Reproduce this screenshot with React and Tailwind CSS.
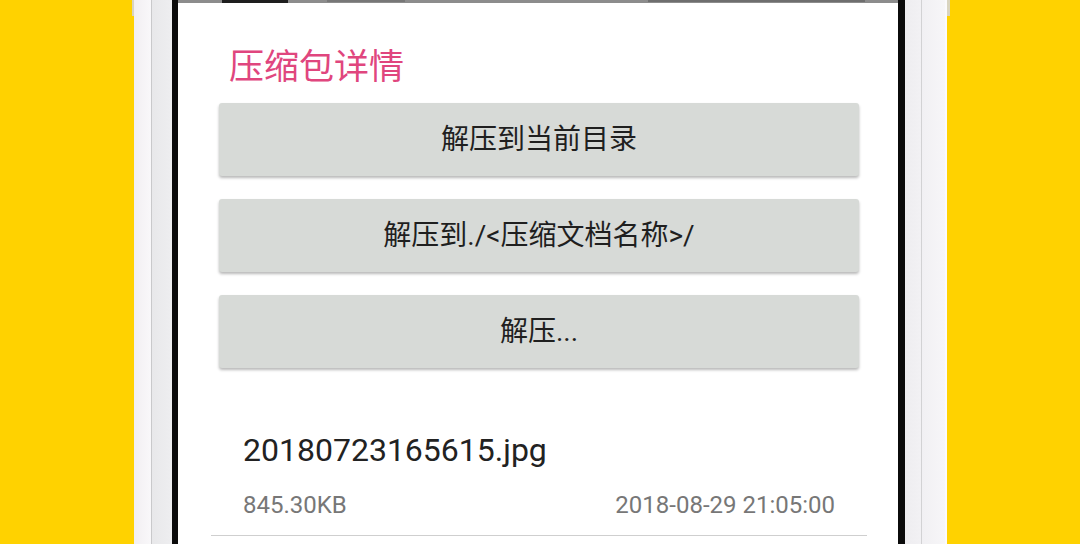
import React from "react";

const cjk = { fontFamily: 'Roboto, "Noto Sans CJK SC", sans-serif' };

function Btn({ children }) {
  return (
    <div className="h-[73px] rounded-[3px] bg-[#d7dad7] shadow-[0_2px_3px_rgba(0,0,0,0.28)] flex items-center justify-center text-[28px] text-[#1f1f1f] leading-none">
      {children}
    </div>
  );
}

export default function App() {
  return (
    <div className="w-[1080px] h-[544px] overflow-hidden bg-[#ffd200] flex" style={cjk}>
      <div className="w-[134px] shrink-0 flex justify-end">
        <div className="w-[3px] h-[16px] bg-[#d9d4c0] mr-[-1px]" />
      </div>
      {/* left frame */}
      <div className="w-[17px] shrink-0 bg-gradient-to-r from-[#f2eff2] to-[#f9f8fa]" />
      <div className="w-[1px] shrink-0 bg-[#c9c9cb]" />
      <div className="w-[20px] shrink-0 bg-gradient-to-r from-[#e8e8ea] to-[#eeeef0]" />
      <div className="w-[6px] shrink-0 bg-[#0b0b0b]" />
      {/* screen */}
      <div className="w-[720px] shrink-0 bg-white flex flex-col">
        <div className="h-[3px] bg-[#8c8c8c] flex">
          <div className="w-[44px]" />
          <div className="w-[66px] bg-[#1e1e1e]" />
          <div className="w-[39px]" />
          <div className="w-[78px] h-[2px] bg-[#777]" />
          <div className="w-[243px]" />
          <div className="w-[217px] h-[2px] bg-[#6e6e6e]" />
        </div>
        <div className="mt-[45px] pl-[51px] text-[35px] leading-[40px] text-[#e0467e]">压缩包详情</div>
        <div className="mt-[15px] ml-[41px] w-[640px] flex flex-col gap-[23px]">
          <Btn>解压到当前目录</Btn>
          <Btn>解压到./&lt;压缩文档名称&gt;/</Btn>
          <Btn>解压...</Btn>
        </div>
        <div className="mt-[62px] pl-[65px] text-[32px] leading-[40px] text-[#222]">20180723165615.jpg</div>
        <div className="mt-[20px] pl-[65px] pr-[63px] flex justify-between text-[24px] leading-[30px] text-[#777]">
          <span>845.30KB</span>
          <span>2018-08-29 21:05:00</span>
        </div>
        <div className="mt-[15px] ml-[33px] mr-[31px] h-[1px] bg-[#cfcfcf]" />
      </div>
      <div className="w-[7px] shrink-0 bg-[#0b0b0b]" />
      {/* right frame */}
      <div className="w-[16px] shrink-0 bg-gradient-to-r from-[#eeedf0] to-[#f2f1f4]" />
      <div className="w-[1px] shrink-0 bg-[#d2d2d4]" />
      <div className="w-[23px] shrink-0 bg-gradient-to-r from-[#f1f0f3] to-[#f7f6f8]" />
      <div className="w-[2px] shrink-0 bg-[#fbfafc]" />
      <div className="flex-1 flex">
        <div className="w-[3px] h-[16px] bg-[#d9d4c0]" />
      </div>
    </div>
  );
}
